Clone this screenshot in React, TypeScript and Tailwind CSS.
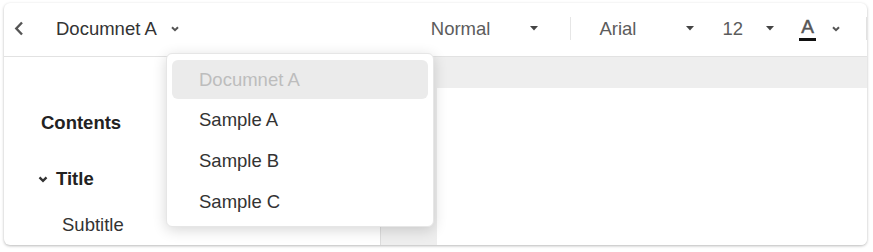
import React from "react";

const Caret = () => (
  <svg width="8" height="5" viewBox="0 0 8 5" className="shrink-0">
    <path d="M0 0 L8 0 L4 4.5 Z" fill="#444" />
  </svg>
);

const SmallChevron = ({ color = "#555", w = 8, h = 6 }: { color?: string; w?: number; h?: number }) => (
  <svg width={w} height={h} viewBox="0 0 8 6" className="shrink-0">
    <path d="M1 1.2 L4 4.2 L7 1.2" fill="none" stroke={color} strokeWidth="2" />
  </svg>
);

export default function App() {
  return (
    <div
      className="w-[873px] h-[252px] bg-white pt-[3px] pl-[4px]"
      style={{ fontFamily: '"Liberation Sans", Arial, sans-serif' }}
    >
      <div className="relative w-[863px] h-[242px] rounded-[6px] bg-white shadow-[0_1px_3px_rgba(0,0,0,0.28)] overflow-visible flex flex-col">
        {/* Toolbar */}
        <div className="h-[54px] shrink-0 border-b border-[#e2e2e2] flex items-center pb-[2px] text-[18.5px] whitespace-nowrap rounded-t-[6px] [&>*]:shrink-0">
          <svg width="12" height="15" viewBox="0 0 12 15" className="ml-[9px] shrink-0">
            <path d="M9 1.5 L3.3 7.5 L9 13.5" fill="none" stroke="#555" strokeWidth="2.4" />
          </svg>
          <span className="ml-[31px] text-[#333]">Documnet A</span>
          <span className="ml-[14px]">
            <SmallChevron />
          </span>
          <span className="ml-[252px] text-[#5c5c5c]">Normal</span>
          <span className="ml-[40px]">
            <Caret />
          </span>
          <div className="ml-[32px] w-px h-[23px] bg-[#e6e6e6]" />
          <span className="ml-[28px] text-[#5c5c5c]">Arial</span>
          <span className="ml-[50px]">
            <Caret />
          </span>
          <span className="ml-[28px] text-[#5c5c5c]">12</span>
          <span className="ml-[23px]">
            <Caret />
          </span>
          <span className="ml-[25px] relative w-[17px] h-[24px] flex flex-col items-center">
            <span className="text-[#555] text-[19px] leading-[20px] font-medium [-webkit-text-stroke:0.5px_#555]">A</span>
            <span className="absolute bottom-[0px] left-0 w-[17px] h-[3px] bg-[#111]" />
          </span>
          <span className="ml-[16px]">
            <SmallChevron />
          </span>
          <div className="ml-[26px] w-px h-[23px] bg-[#e2e2e2]" />
        </div>

        {/* Body */}
        <div className="flex flex-1 min-h-0">
          <div className="w-[377px] shrink-0 border-r border-[#dcdcdc] pl-[37px] pt-[54px] rounded-bl-[6px]">
            <div className="text-[18.5px] leading-[24px] font-bold text-[#222]">Contents</div>
            <div className="mt-[32px] flex items-center -ml-[3px] text-[18.5px] leading-[24px] font-bold text-[#222]">
              <SmallChevron color="#333" w={10} h={7} />
              <span className="ml-[8px]">Title</span>
            </div>
            <div className="mt-[22px] ml-[21px] text-[18.5px] leading-[24px] text-[#333]">Subtitle</div>
          </div>
          <div className="flex-1 bg-[#eeeeee] pt-[31px] pl-[56px] rounded-br-[6px] flex flex-col">
            <div className="flex-1 bg-white rounded-br-[6px]" />
          </div>
        </div>

        {/* Dropdown */}
        <div className="absolute left-[162px] top-[50px] w-[268px] h-[174px] rounded-[6px] bg-white border border-[#e6e6e6] shadow-[0_3px_14px_rgba(0,0,0,0.16)] px-[5px] pt-[6px] text-[18.5px]">
          <div className="h-[39px] rounded-[6px] bg-[#ebebeb] flex items-center pl-[27px] text-[#bdbdbd]">
            Documnet A
          </div>
          <div className="h-[42px] flex items-center pl-[27px] text-[#333]">Sample A</div>
          <div className="h-[40px] flex items-center pl-[27px] text-[#333]">Sample B</div>
          <div className="h-[42px] flex items-center pl-[27px] text-[#333]">Sample C</div>
        </div>
      </div>
    </div>
  );
}
